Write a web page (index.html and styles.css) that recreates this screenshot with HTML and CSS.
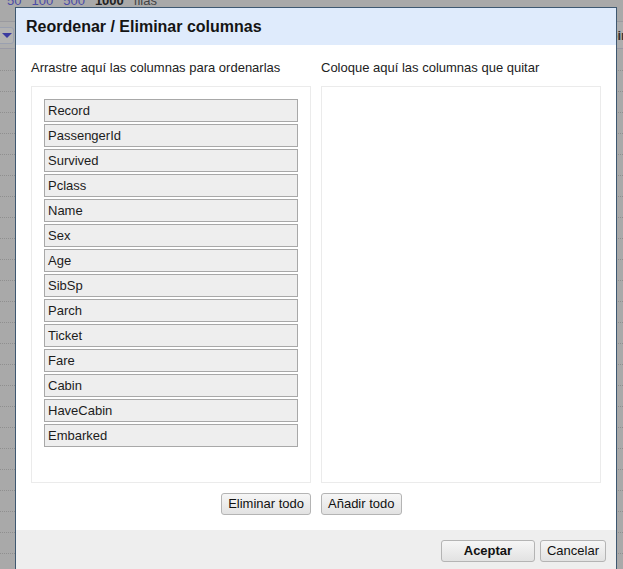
FILE: index.html
```html
<!DOCTYPE html>
<html lang="es">
<head>
<meta charset="utf-8">
<title>Reordenar / Eliminar columnas</title>
<link rel="stylesheet" href="styles.css">
</head>
<body>
<div class="page">
  <div class="pager">
    <span class="lnk">50</span><span class="lnk">100</span><span class="lnk">500</span><span class="cur">1000</span><span class="txt">filas</span>
  </div>
  <div class="headrow">
    <span class="drop"><span class="tri"></span></span>
    <span class="colhead">Cabin</span>
  </div>
  <div class="rows">
    <div class="row"></div><div class="row"></div><div class="row"></div><div class="row"></div>
    <div class="row"></div><div class="row"></div><div class="row"></div><div class="row"></div>
    <div class="row"></div><div class="row"></div><div class="row"></div><div class="row"></div>
    <div class="row"></div><div class="row"></div><div class="row"></div><div class="row"></div>
    <div class="row"></div><div class="row"></div><div class="row"></div><div class="row"></div>
    <div class="row"></div><div class="row"></div><div class="row"></div><div class="row"></div>
  </div>
</div>

<div class="dialog">
  <div class="dlg-head">Reordenar / Eliminar columnas</div>
  <div class="dlg-body">
    <div class="cols">
      <div class="col">
        <div class="label">Arrastre aquí las columnas para ordenarlas</div>
        <div class="box">
          <div class="item">Record</div>
          <div class="item">PassengerId</div>
          <div class="item">Survived</div>
          <div class="item">Pclass</div>
          <div class="item">Name</div>
          <div class="item">Sex</div>
          <div class="item">Age</div>
          <div class="item">SibSp</div>
          <div class="item">Parch</div>
          <div class="item">Ticket</div>
          <div class="item">Fare</div>
          <div class="item">Cabin</div>
          <div class="item">HaveCabin</div>
          <div class="item">Embarked</div>
        </div>
        <div class="actions right"><button class="btn">Eliminar todo</button></div>
      </div>
      <div class="col">
        <div class="label">Coloque aquí las columnas que quitar</div>
        <div class="box"></div>
        <div class="actions"><button class="btn">Añadir todo</button></div>
      </div>
    </div>
  </div>
  <div class="dlg-foot">
    <button class="btn primary">Aceptar</button>
    <button class="btn">Cancelar</button>
  </div>
</div>
</body>
</html>
```

FILE: styles.css
```css
html, body {
  margin: 0;
  padding: 0;
  width: 623px;
  height: 569px;
  overflow: hidden;
  background: #a9a9a9;
  font-family: "Liberation Sans", Arial, sans-serif;
  font-size: 13px;
  color: #111;
}

.page {
  position: relative;
  width: 623px;
  height: 569px;
}

.pager {
  display: flex;
  height: 29px;
  margin-top: -8px;
  padding-left: 7px;
  line-height: 18px;
  font-size: 13px;
}
.pager span { margin-right: 10px; }
.pager .lnk { color: #4b4ba6; }
.pager .cur { font-weight: bold; color: #222; }
.pager .txt { color: #444; }

.headrow {
  display: flex;
  justify-content: space-between;
  align-items: center;
  height: 26px;
  border-top: 1px solid #9a9a9f;
  border-bottom: 1px solid #9a9aa6;
  background: #adadad;
}
.drop {
  display: flex;
  align-items: center;
  justify-content: center;
  width: 13px;
  height: 15px;
  margin-left: -1px;
  border: 1px solid #9aa0b0;
  border-radius: 0 3px 3px 0;
  background: #b2b2b2;
}
.tri {
  width: 0;
  height: 0;
  border-left: 5px solid transparent;
  border-right: 5px solid transparent;
  border-top: 5px solid #3a3aa0;
}
.colhead {
  font-weight: bold;
  color: #333;
  margin-right: -6px;
}

.rows {
  display: flex;
  flex-direction: column;
  padding-top: 1px;
}
.row {
  height: 20px;
  border-bottom: 1px dotted #8f8f8f;
}

.dialog {
  position: absolute;
  left: 15px;
  top: 7px;
  width: 600px;
  border: 1px solid #3e5871;
  background: #fff;
  display: flex;
  flex-direction: column;
}

.dlg-head {
  height: 37px;
  line-height: 37px;
  padding-left: 10px;
  background: #dfebfc;
  font-size: 16px;
  font-weight: bold;
  color: #141414;
}

.dlg-body {
  padding: 15px 15px 15px;
}

.cols {
  display: flex;
  gap: 10px;
}
.col {
  width: 280px;
  display: flex;
  flex-direction: column;
}
.label {
  line-height: 16px;
  height: 16px;
  margin-bottom: 10px;
  color: #222;
}
.box {
  height: 371px;
  border: 1px solid #ebebeb;
  padding: 12px;
  display: flex;
  flex-direction: column;
  gap: 2px;
}
.item {
  height: 21px;
  line-height: 21px;
  border: 1px solid #a8a8a8;
  background: #eeeeee;
  padding-left: 3px;
  color: #1c1c1c;
}

.actions {
  display: flex;
  margin-top: 10px;
}
.actions.right { justify-content: flex-end; }

.btn {
  font-family: "Liberation Sans", Arial, sans-serif;
  font-size: 13px;
  height: 22px;
  padding: 0 6px;
  border: 1px solid #b4b4b4;
  border-radius: 3px;
  background: linear-gradient(#f6f6f6, #e2e2e2);
  color: #111;
  line-height: 20px;
}
.btn.primary {
  font-weight: bold;
  width: 94px;
}

.dlg-foot {
  display: flex;
  justify-content: flex-end;
  gap: 5px;
  background: #eeeeee;
  padding: 10px 10px 20px;
}
```
